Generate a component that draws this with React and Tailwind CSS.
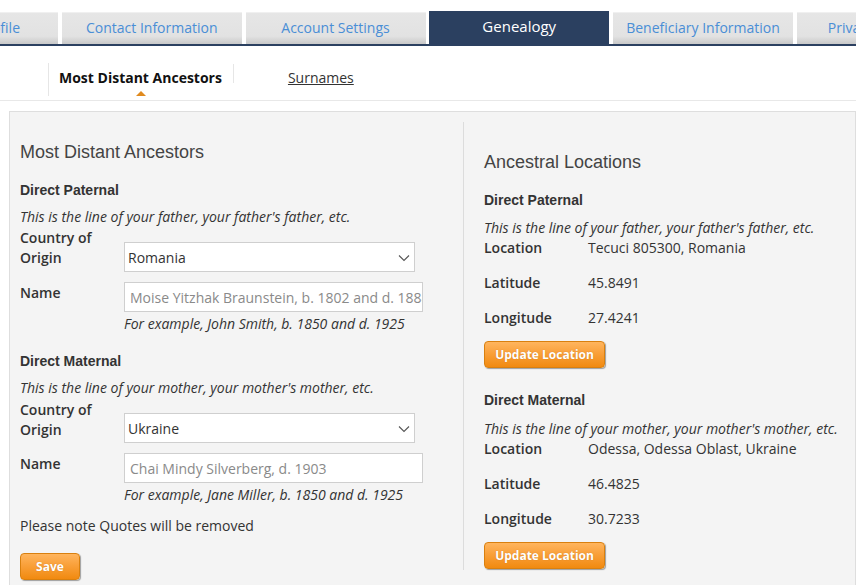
import React from "react";

const tabBase =
  "w-[180px] shrink-0 h-[32px] flex items-center justify-center pb-[2px] text-[14px] text-[#4a8ed6] bg-[linear-gradient(to_bottom,#e6e6e6_0%,#e2e2e2_75%,#c9c9c9_100%)] border-t border-[#f0f0f0]";

function Chevron() {
  return (
    <svg width="12" height="8" viewBox="0 0 12 8" className="absolute right-[4px] top-[11px]">
      <path d="M1 1.5 L6 6.5 L11 1.5" fill="none" stroke="#555" strokeWidth="1.1" />
    </svg>
  );
}

function Select({ value }) {
  return (
    <div className="relative w-[291px] h-[30px] bg-white border border-[#cfcfcf] flex items-center pl-[3px] text-[14px] text-[#333]">
      {value}
      <Chevron />
    </div>
  );
}

function Input({ value }) {
  return (
    <div className="w-[299px] h-[30px] bg-white border border-[#cfcfcf] flex items-center pl-[5px] overflow-hidden whitespace-nowrap text-[14px] text-[#8a8a8a]">
      {value}
    </div>
  );
}

function OrangeButton({ children, w }) {
  return (
    <button
      className={`${w} h-[27px] rounded-[4px] border border-[#d9800f] bg-[linear-gradient(to_bottom,#ffb55e_0%,#f9a03a_45%,#f18a10_100%)] shadow-[1px_1px_1px_rgba(0,0,0,0.35)] text-white font-bold text-[12px] font-['Open_Sans'] flex items-center justify-center [text-shadow:0_0_1px_rgba(160,80,0,0.5)]`}
    >
      {children}
    </button>
  );
}

function AncestorBlock({ title, desc, country, name, example, first }) {
  return (
    <div>
      <div className="font-['Liberation_Sans',Arial,sans-serif] font-bold text-[14px] leading-[20px] text-[#333]">{title}</div>
      <div className="mt-[7px] italic text-[14px] leading-[20px]">{desc}</div>
      <div className={first ? "flex mt-[1px]" : "flex mt-[2px]"}>
        <div className="w-[104px] font-semibold text-[14px] leading-[20px] text-[#333]">
          Country of
          <br />
          Origin
        </div>
        <div className={first ? "mt-[14px]" : "mt-[13px]"}>
          <Select value={country} />
        </div>
      </div>
      <div className="flex mt-[10px]">
        <div className="w-[104px] pt-[1px] font-semibold text-[14px] leading-[20px]">Name</div>
        <div>
          <Input value={name} />
          <div className="mt-[2px] italic text-[14px] leading-[20px]">{example}</div>
        </div>
      </div>
    </div>
  );
}

function LocationBlock({ title, desc, location, lat, lng, gap, btn }) {
  return (
    <div>
      <div className="font-['Liberation_Sans',Arial,sans-serif] font-bold text-[14px] leading-[20px] text-[#333]">{title}</div>
      <div className={`${gap} italic text-[14px] leading-[20px]`}>{desc}</div>
      <div className="flex text-[14px] leading-[20px]">
        <div className="w-[104px] font-semibold">Location</div>
        <div>{location}</div>
      </div>
      <div className="flex text-[14px] leading-[20px] mt-[15px]">
        <div className="w-[104px] font-semibold">Latitude</div>
        <div>{lat}</div>
      </div>
      <div className="flex text-[14px] leading-[20px] mt-[15px]">
        <div className="w-[104px] font-semibold">Longitude</div>
        <div>{lng}</div>
      </div>
      <div className={btn}>
        <OrangeButton w="w-[121px]">Update Location</OrangeButton>
      </div>
    </div>
  );
}

export default function App() {
  return (
    <div className="w-[856px] h-[585px] overflow-hidden bg-white font-['Open_Sans',sans-serif] text-[#333]">
      {/* Tabs */}
      <div className="pt-[11px] border-b-[2px] border-[#2b4060] overflow-hidden">
        <div className="flex items-end gap-[3.75px] -ml-[122px]">
          <div className={tabBase.replace("justify-center", "justify-end pr-[38px]")}>My Profile</div>
          <div className={tabBase}>Contact Information</div>
          <div className={tabBase}>Account Settings</div>
          <div className="w-[180px] shrink-0 h-[33px] flex items-center justify-center pb-[2px] text-[15px] text-white bg-[#2b4060]">
            Genealogy
          </div>
          <div className={tabBase}>Beneficiary Information</div>
          <div className={tabBase.replace("justify-center", "justify-start pl-[31px]")}>Privacy Settings</div>
        </div>
      </div>

      {/* Sub nav */}
      <div className="h-[55px] border-b border-[#e8e8e8] flex items-start pt-[17px]">
        <div className="ml-[48px] border-l border-[#e6e6e6] h-[33px] pl-[10px] pr-[11px] relative">
          <div className="text-[14px] font-bold text-[#111] leading-[20px] mt-[5px]">Most Distant Ancestors</div>
          <div className="absolute left-[87px] top-[28px] w-0 h-0 border-l-[5px] border-r-[5px] border-b-[5px] border-l-transparent border-r-transparent border-b-[#e08a1e]" />
        </div>
        <div className="border-l border-[#e6e6e6] h-[19px] mt-[1px]" />
        <div className="ml-[54px] mt-[5px] text-[14px] leading-[20px] underline text-[#333]">Surnames</div>
      </div>

      {/* Panel */}
      <div className="mt-[10px] ml-[9px] bg-[#f4f4f4] border border-[#dedede] flex h-[500px]">
        <div className="w-[453px] pl-[10px] pt-[28px]">
          <div className="font-['Liberation_Sans',Arial,sans-serif] text-[18px] leading-[24px] text-[#444]">Most Distant Ancestors</div>
          <div className="mt-[16px]">
            <AncestorBlock
              first
              title="Direct Paternal"
              desc="This is the line of your father, your father's father, etc."
              country="Romania"
              name="Moise Yitzhak Braunstein, b. 1802 and d. 1888"
              example="For example, John Smith, b. 1850 and d. 1925"
            />
          </div>
          <div className="mt-[17px]">
            <AncestorBlock
              title="Direct Maternal"
              desc="This is the line of your mother, your mother's mother, etc."
              country="Ukraine"
              name="Chai Mindy Silverberg, d. 1903"
              example="For example, Jane Miller, b. 1850 and d. 1925"
            />
          </div>
          <div className="mt-[11px] text-[14px] leading-[20px]">Please note Quotes will be removed</div>
          <div className="mt-[17px]">
            <OrangeButton w="w-[60px]">Save</OrangeButton>
          </div>
        </div>
        <div className="mt-[10px] h-[448px] border-l border-[#dcdcdc] pl-[20px] pt-[28px] flex-1">
          <div className="font-['Liberation_Sans',Arial,sans-serif] text-[18px] leading-[24px] text-[#444]">Ancestral Locations</div>
          <div className="mt-[16px]">
            <LocationBlock
              gap="mt-[8px]"
              btn="mt-[13px]"
              title="Direct Paternal"
              desc="This is the line of your father, your father's father, etc."
              location="Tecuci 805300, Romania"
              lat="45.8491"
              lng="27.4241"
            />
          </div>
          <div className="mt-[22px]">
            <LocationBlock
              gap="mt-[9px]"
              btn="mt-[13px]"
              title="Direct Maternal"
              desc="This is the line of your mother, your mother's mother, etc."
              location="Odessa, Odessa Oblast, Ukraine"
              lat="46.4825"
              lng="30.7233"
            />
          </div>
        </div>
      </div>
    </div>
  );
}
